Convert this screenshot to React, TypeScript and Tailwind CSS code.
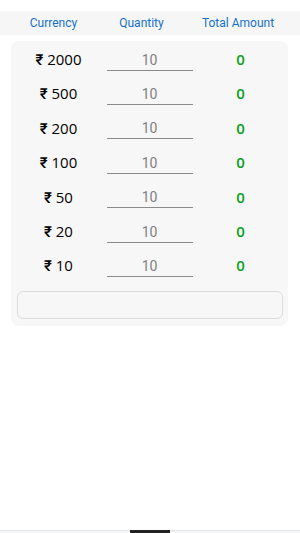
import React from "react";

const rows = ["2000", "500", "200", "100", "50", "20", "10"];

export default function App() {
  return (
    <div
      className="h-[533px] w-[300px] bg-white flex flex-col overflow-hidden"
      style={{ fontFamily: "Roboto, 'Noto Sans', sans-serif" }}
    >
      <div className="mt-[11px] h-[24px] bg-[#f6f6f6] grid grid-cols-[107px_69px_1fr] items-center text-[12px] text-[#1570cf]">
        <div className="text-center">Currency</div>
        <div className="text-center">Quantity</div>
        <div className="text-center">Total Amount</div>
      </div>
      <div className="mt-[6px] mx-[11px] w-[277px] rounded-[8px] bg-[#f7f7f7] pt-[1px] pb-[7px]">
        <div className="px-[2px]">
          {rows.map((r) => (
            <div key={r} className="grid grid-cols-3 h-[34.4px] items-center">
              <div
                className="text-center text-[15px] font-medium text-black"
                style={{ fontFamily: "'Open Sans', Roboto, sans-serif" }}
              >
                ₹ {r}
              </div>
              <div className="flex justify-center">
                <div className="w-[86px] h-[22px] mt-[1px] border-b border-[#8a8a8a] text-center text-[14px] font-normal text-[#808080] leading-[22px]">
                  10
                </div>
              </div>
              <div
                className="text-center text-[15px] font-semibold text-[#0a9e1e]"
                style={{ fontFamily: "'Open Sans', Roboto, sans-serif" }}
              >
                0
              </div>
            </div>
          ))}
        </div>
        <div className="mt-[8px] ml-[6px] mr-[5px] h-[28px] rounded-[6px] border-[1.5px] border-[#dcdcdc] bg-[#f7f7f7]" />
      </div>
      <div className="flex-1" />
      <div className="h-[3px] border-t border-[#e3e6e8] bg-[#f4f6f7] flex justify-center">
        <div className="w-[40px] h-[3px] -mt-[1px] bg-[#222]" />
      </div>
    </div>
  );
}
